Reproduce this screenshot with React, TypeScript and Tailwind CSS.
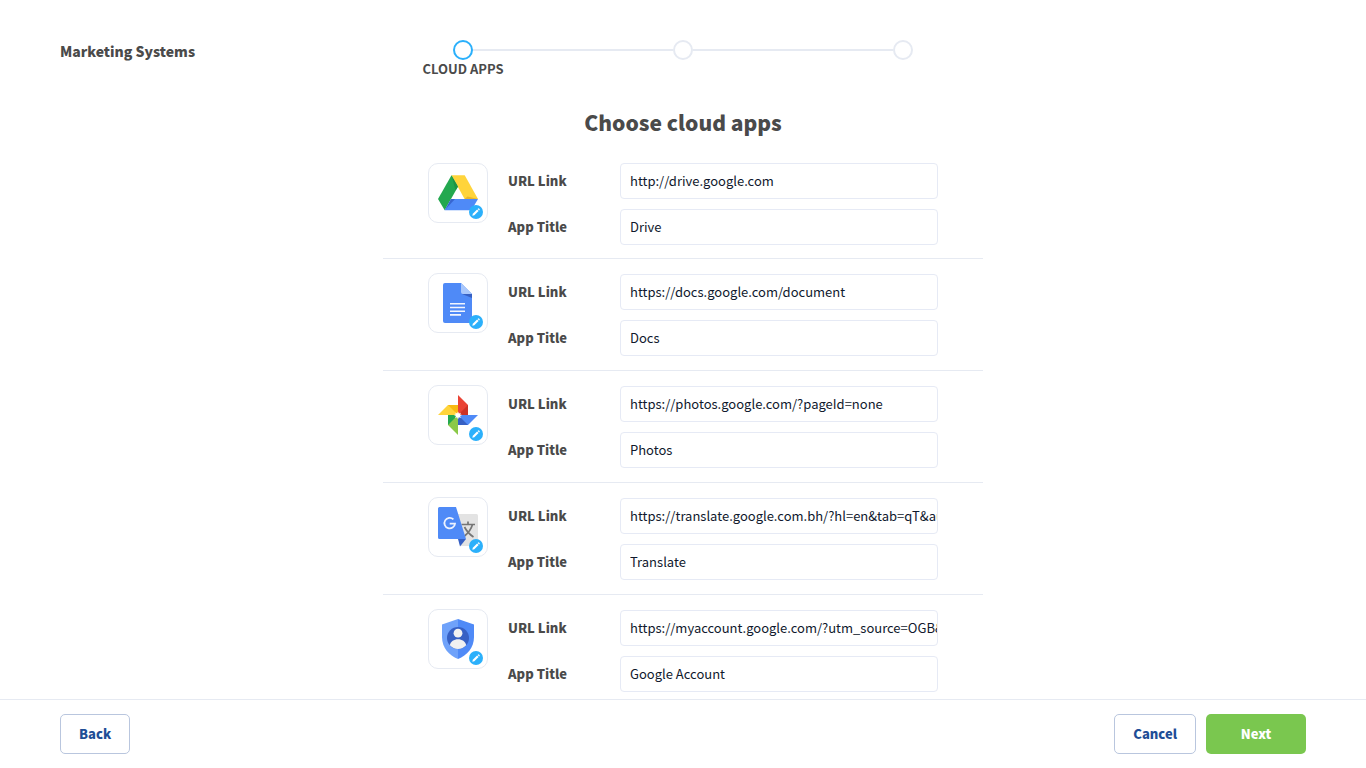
import type { ReactNode } from 'react';

function DriveIcon() {
  return (
    <svg viewBox="0 0 40 40" className="h-10 w-10" aria-hidden="true">
      <path d="M0 26 13.5 2.3 20 13.5 6.7 37.2Z" fill="#23a84f" />
      <path d="M13.5 2.3H26.7L40 26H26.6Z" fill="#ffd43b" />
      <path d="M13.5 2.3 20 13.5 17.5 17.6Z" fill="#1f9445" />
      <path d="M13.1 26H40L33.4 37.2H6.7Z" fill="#4f8af7" />
      <path d="M13.1 26H17L6.7 37.2Z" fill="#3765d0" />
      <path d="M26.6 26H40L29.5 23.5Z" fill="#e9b529" />
    </svg>
  );
}

function DocsIcon() {
  return (
    <svg viewBox="0 0 40 40" className="h-10 w-10" aria-hidden="true">
      <path d="M7 0H23L34 11V38a2 2 0 0 1-2 2H7a2 2 0 0 1-2-2V2a2 2 0 0 1 2-2Z" fill="#4f8af7" />
      <path d="M23 0 34 11H25a2 2 0 0 1-2-2Z" fill="#a9c7fb" />
      <path d="M24 11H34V15Z" fill="#3660c4" />
      <path d="M12 20h15v1.6H12ZM12 23.7h15v1.6H12ZM12 27.4h15V29H12ZM12 31.1h11v1.6H12Z" fill="#f2f6fe" />
    </svg>
  );
}

function PhotosIcon() {
  return (
    <svg viewBox="0 0 40 40" className="h-10 w-10" aria-hidden="true">
      <path d="M20 0 30 10V20H20Z" fill="#ea4335" />
      <path d="M30 10V20H20Z" fill="#cc3327" />
      <path d="M40 20 30 30H20V20Z" fill="#4f8af7" />
      <path d="M30 30H20V20Z" fill="#3660c4" />
      <path d="M20 40 10 30V20H20Z" fill="#8bc948" />
      <path d="M10 30V20H20Z" fill="#23a84f" />
      <path d="M0 20 10 10H20V20Z" fill="#ffd43b" />
      <path d="M10 10H20V20Z" fill="#f8b911" />
      <path d="m20 16.500.9 2 2-.8-.8 1.900 2 .5-2 .9.8 2-2-.8-.9 2.100-.9-2.100-2 .8.800-2-2-.9 2-.8-.8-1.700 2 .8Z" fill="#fff" />
    </svg>
  );
}

function TranslateIcon() {
  return (
    <svg viewBox="0 0 40 40" className="h-10 w-10" aria-hidden="true">
      <path d="M12 7H38.5A1.5 1.5 0 0 1 40 8.500V37.500A1.500 1.500 0 0 1 38.500 39H23Z" fill="#e3e3e3" />
      <path d="M23.500 17.500H37M30 14.500V17.500M34.500 17.500Q32.500 24.500 26 29.500M26.500 20Q29.500 26 35.500 30" fill="none" stroke="#757575" strokeWidth="1.700" />
      <path d="M20 32H28L22 39.500Z" fill="#3660c4" />
      <path d="M1.500 0H18L28 32H1.500A1.500 1.500 0 0 1 0 30.500V1.500A1.500 1.500 0 0 1 1.500 0Z" fill="#4f8af7" />
      <path d="M15.400 12.300A5.300 5.300 0 1 0 17 16.600H11.700" fill="none" stroke="#eef3fe" strokeWidth="1.800" />
    </svg>
  );
}

function AccountIcon() {
  return (
    <svg viewBox="0 0 40 40" className="h-10 w-10" aria-hidden="true">
      <path d="M20 0 36 5.500V18C36 28.500 29 36.500 20 40Z" fill="#4f8af7" />
      <path d="M20 0 4 5.500V18C4 28.500 11 36.500 20 40Z" fill="#6fa2fa" />
      <circle cx="20" cy="19" r="11" fill="#3660c4" />
      <circle cx="20" cy="14.200" r="4.400" fill="#f1f1f1" />
      <path d="M11.800 26.300C12.500 22.500 16 20.300 20 20.300S27.500 22.500 28.200 26.300A11 11 0 0 1 11.800 26.300Z" fill="#f1f1f1" />
    </svg>
  );
}

type CloudApp = { id: string; url: string; title: string; icon: ReactNode };

const apps: CloudApp[] = [
  { id: 'drive', url: 'http://drive.google.com', title: 'Drive', icon: <DriveIcon /> },
  { id: 'docs', url: 'https://docs.google.com/document', title: 'Docs', icon: <DocsIcon /> },
  { id: 'photos', url: 'https://photos.google.com/?pageId=none', title: 'Photos', icon: <PhotosIcon /> },
  { id: 'translate', url: 'https://translate.google.com.bh/?hl=en&tab=qT&authuser=0', title: 'Translate', icon: <TranslateIcon /> },
  { id: 'account', url: 'https://myaccount.google.com/?utm_source=OGB&tab=qk', title: 'Google Account', icon: <AccountIcon /> },
];

const steps = [{ label: 'CLOUD APPS', active: true }, { label: '', active: false }, { label: '', active: false }];

function Stepper() {
  return (
    <ol className="flex">
      {steps.map((step, i) => (
        <li key={i} className="flex w-[220px] flex-col items-center" aria-current={step.active ? 'step' : undefined}>
          <div className="flex w-full items-center">
            <span className={i === 0 ? 'h-0.5 flex-1' : 'h-0.5 flex-1 bg-[#e6eaf2]'} />
            <span className={step.active ? 'h-5 w-5 rounded-full border-2 border-[#2bb0fb]' : 'h-5 w-5 rounded-full border-2 border-[#e6eaf2]'} />
            <span className={i === steps.length - 1 ? 'h-0.5 flex-1' : 'h-0.5 flex-1 bg-[#e6eaf2]'} />
          </div>
          {step.label && <span className="text-[13px] leading-[18px] font-bold">{step.label}</span>}
        </li>
      ))}
    </ol>
  );
}

function Field({ id, label, value }: { id: string; label: string; value: string }) {
  return (
    <div className="flex items-center">
      <label htmlFor={id} className="w-28 text-[13px] leading-5 font-black">{label}</label>
      <input
        id={id}
        type="text"
        defaultValue={value}
        className="h-9 min-w-0 flex-1 rounded-[4px] border border-[#e6eaf5] bg-white pb-0.5 pl-[9px] text-[13px] text-[#10192d] outline-none focus:border-[#2bb0fb]"
      />
    </div>
  );
}

function AppRow({ app }: { app: CloudApp }) {
  return (
    <li className="group flex gap-5 border-b border-[#e6eaf2] px-[45px] py-[14px] first:pt-0 first:pb-[13px] last:border-b-0 last:pb-0">
      <div className="relative flex h-[60px] w-[60px] shrink-0 items-center justify-center rounded-[10px] border border-[#e6eaf2]">
        {app.icon}
        <button type="button" aria-label={`Edit ${app.title} icon`} className="absolute right-1 bottom-[3px] h-3.5 w-3.5 rounded-full bg-[#2bb0fb]">
          <svg viewBox="0 0 14 14" className="h-3.5 w-3.5" aria-hidden="true">
            <path d="m3.300 10.700.5-2L8.100 4.400 9.600 5.900 5.300 10.200Z" fill="#fff" />
            <path d="m8.600 3.900.5-.5q.4-.3.8 0l.7.700q.3.400 0 .8l-.5.500Z" fill="#fff" />
          </svg>
        </button>
      </div>
      <div className="flex flex-1 flex-col gap-2.5 pt-px group-first:pt-0">
        <Field id={`${app.id}-url`} label="URL Link" value={app.url} />
        <Field id={`${app.id}-title`} label="App Title" value={app.title} />
      </div>
    </li>
  );
}

export default function App() {
  return (
    <div className="flex h-screen flex-col bg-white font-['Noto_Sans_CJK_SC',sans-serif] text-[#4a4a4a]">
      <header className="grid grid-cols-[1fr_auto_1fr] items-start px-[60px] pt-10">
        <p className="text-[14px] leading-[22px] font-black">Marketing Systems</p>
        <Stepper />
      </header>
      <main className="min-h-0 flex-1 overflow-y-auto pt-7">
        <h1 className="text-center text-[21px] leading-8 font-black">Choose cloud apps</h1>
        <ul className="mx-auto mt-[25px] w-full max-w-[600px]">
          {apps.map((app) => <AppRow key={app.id} app={app} />)}
        </ul>
      </main>
      <footer className="flex items-center gap-2.5 border-t border-[#e6eaf2] px-[60px] py-[14px] text-[13px] font-black">
        <button type="button" className="mr-auto h-10 rounded-[5px] border border-[#b9c6de] px-[18px] text-[#1f4e96]">Back</button>
        <button type="button" className="h-10 rounded-[5px] border border-[#b9c6de] px-[18px] text-[#1f4e96]">Cancel</button>
        <button type="button" className="h-10 w-[100px] rounded-[5px] bg-[#7ac74f] text-white">Next</button>
      </footer>
    </div>
  );
}
